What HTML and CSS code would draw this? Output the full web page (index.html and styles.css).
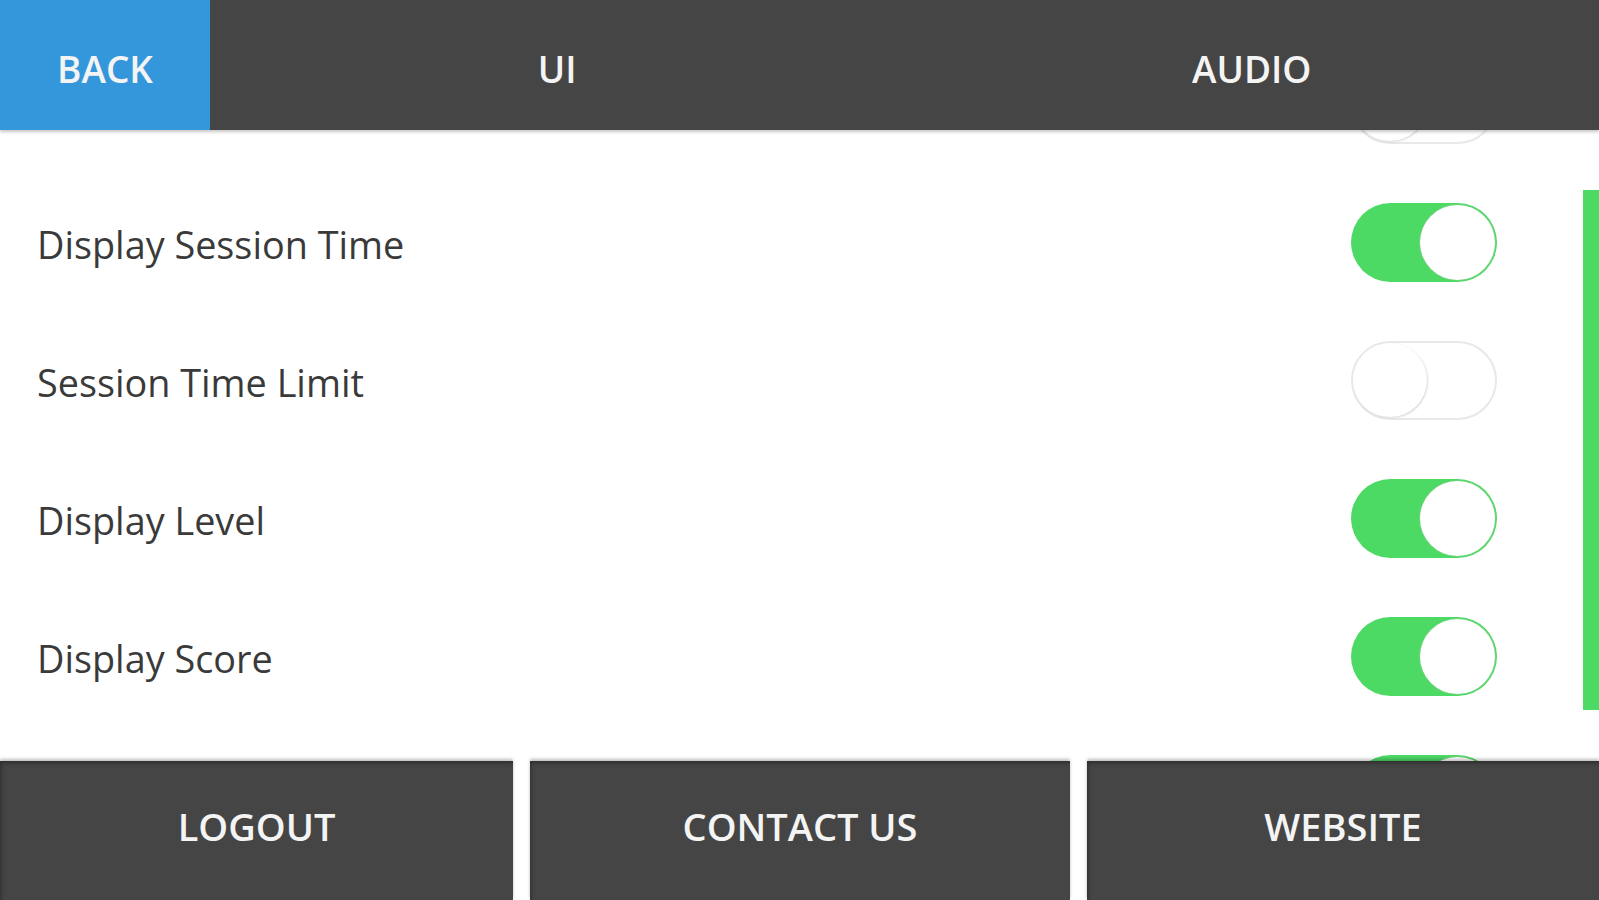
FILE: index.html
```html
<!DOCTYPE html>
<html lang="en">
<head>
<meta charset="utf-8">
<title>Settings</title>
<link rel="stylesheet" href="styles.css">
</head>
<body>
<div class="app">
  <header class="topbar">
    <div class="tab tab-back">BACK</div>
    <div class="tab">UI</div>
    <div class="tab">AUDIO</div>
  </header>
  <main class="content">
    <div class="list">
      <div class="row"><span class="label"></span><span class="toggle off"><span class="knob"></span></span></div>
      <div class="row"><span class="label">Display Session Time</span><span class="toggle on"><span class="knob"></span></span></div>
      <div class="row"><span class="label">Session Time Limit</span><span class="toggle off"><span class="knob"></span></span></div>
      <div class="row"><span class="label">Display Level</span><span class="toggle on"><span class="knob"></span></span></div>
      <div class="row"><span class="label">Display Score</span><span class="toggle on"><span class="knob"></span></span></div>
      <div class="row"><span class="label"></span><span class="toggle on"><span class="knob"></span></span></div>
    </div>
    <div class="scrollbar"></div>
  </main>
  <footer class="bottombar">
    <div class="fbtn fbtn-logout">LOGOUT</div>
    <div class="fbtn fbtn-contact">CONTACT US</div>
    <div class="fbtn fbtn-web">WEBSITE</div>
  </footer>
</div>
</body>
</html>
```

FILE: styles.css
```css
* { box-sizing: border-box; }
html, body {
  margin: 0;
  padding: 0;
  background: #ffffff;
  font-family: "Open Sans", "Noto Sans", sans-serif;
  overflow: hidden;
}
.app {
  width: 1599px;
  height: 900px;
  display: flex;
  flex-direction: column;
  overflow: hidden;
}
.topbar {
  height: 130px;
  flex: none;
  display: flex;
  background: #454545;
  position: relative;
  z-index: 2;
  box-shadow: 0 2px 3px rgba(0, 0, 0, 0.22);
}
.tab {
  flex: 1;
  display: flex;
  align-items: center;
  justify-content: center;
  padding-top: 6px;
  color: #f4f4f4;
  font-size: 37px;
  font-weight: 600;
}
.tab-back {
  flex: none;
  width: 210px;
  background: #3597db;
}
.content {
  height: 631px;
  flex: none;
  position: relative;
  overflow: hidden;
  background: #fff;
}
.list {
  margin-top: -95px;
  display: flex;
  flex-direction: column;
}
.row {
  height: 138px;
  display: flex;
  align-items: center;
  justify-content: space-between;
  padding: 0 102px 0 37px;
}
.label {
  font-size: 37.8px;
  color: #3a3a3a;
  padding-top: 5px;
}
.toggle {
  width: 146px;
  height: 79px;
  border-radius: 40px;
  display: flex;
  align-items: center;
  padding: 2px;
  flex: none;
}
.toggle .knob {
  width: 75px;
  height: 75px;
  border-radius: 50%;
  background: #fff;
}
.toggle.on {
  background: #4cd964;
  justify-content: flex-end;
}
.toggle.on .knob {
  box-shadow: 0 0 0 1px rgba(120, 210, 130, 0.8);
}
.toggle.off {
  background: #fff;
  border: 2px solid #e8e8e8;
  justify-content: flex-start;
  padding: 0;
}
.toggle.off .knob {
  width: 74px;
  height: 74px;
  box-shadow: 1px 1px 2px rgba(0, 0, 0, 0.15);
}
.scrollbar {
  position: absolute;
  right: 0;
  top: 60px;
  width: 16px;
  height: 520px;
  background: #4cd964;
}
.bottombar {
  height: 139px;
  flex: none;
  display: flex;
  gap: 17px;
  position: relative;
  z-index: 2;
  background: #fff;
}
.fbtn {
  height: 139px;
  display: flex;
  align-items: center;
  justify-content: center;
  padding-bottom: 9px;
  background: #454545;
  color: #f4f4f4;
  font-size: 38px;
  font-weight: 600;
  box-shadow: 0 -2px 3px rgba(0, 0, 0, 0.25), inset 3px 4px 4px -2px rgba(0, 0, 0, 0.35);
}
.fbtn-logout { width: 513px; }
.fbtn-contact { width: 540px; }
.fbtn-web { width: 512px; }
```
